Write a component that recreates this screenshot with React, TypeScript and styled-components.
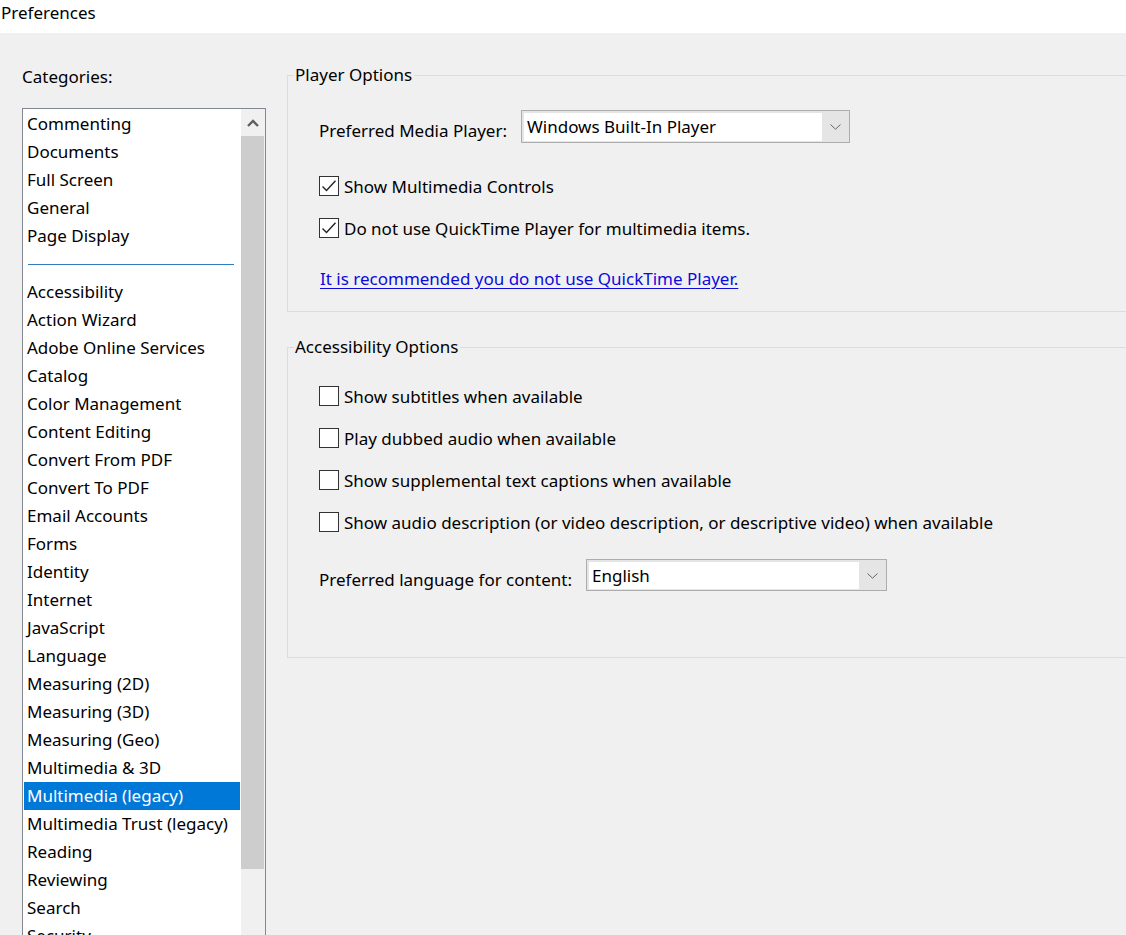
import React from "react";
import styled, { createGlobalStyle } from "styled-components";

const Global = createGlobalStyle`
  html, body { margin: 0; padding: 0; overflow: hidden; }
  body { font-family: "Noto Sans", "Open Sans", sans-serif; color: #000; }
  * { box-sizing: border-box; }
`;

const Root = styled.div`
  width: 1126px;
  height: 935px;
  overflow: hidden;
  background: #f0f0f0;
  display: flex;
  flex-direction: column;
  font-size: 17px;
`;

const TitleBar = styled.div`
  height: 33px;
  background: #ffffff;
  padding-left: 1px;
  line-height: 26px;
  font-size: 17px;
  flex-shrink: 0;
`;

const Body = styled.div`
  flex: 1;
  display: flex;
  min-height: 0;
`;

const LeftColumn = styled.div`
  width: 287px;
  padding: 32px 0 0 22px;
  display: flex;
  flex-direction: column;
  flex-shrink: 0;
`;

const CategoriesLabel = styled.div`
  line-height: 24px;
  height: 24px;
  margin-bottom: 19px;
  flex-shrink: 0;
`;

const ListBox = styled.div`
  width: 244px;
  height: 900px;
  border: 1px solid #828790;
  background: #ffffff;
  display: flex;
  flex-shrink: 0;
  overflow: hidden;
`;

const ItemList = styled.div`
  flex: 1;
  padding: 1px 1px 0 1px;
  display: flex;
  flex-direction: column;
`;

const Item = styled.div<{ $selected?: boolean }>`
  height: 28px;
  line-height: 28px;
  flex-shrink: 0;
  padding-left: 3px;
  white-space: nowrap;
  background: ${(p) => (p.$selected ? "#0078d7" : "transparent")};
  color: ${(p) => (p.$selected ? "#ffffff" : "#000000")};
`;

const Separator = styled.div`
  height: 28px;
  flex-shrink: 0;
  display: flex;
  align-items: center;
  padding: 0 4px 0 4px;
  &::after {
    content: "";
    display: block;
    height: 1px;
    width: 206px;
    background: #2f7dbd;
  }
`;

const ScrollBar = styled.div`
  width: 24px;
  background: #f0f0f0;
  display: flex;
  flex-direction: column;
  flex-shrink: 0;
  padding-right: 1px;
`;

const ScrollButton = styled.div`
  height: 27px;
  flex-shrink: 0;
  display: flex;
  align-items: center;
  justify-content: center;
`;

const ScrollThumb = styled.div`
  height: 733px;
  flex-shrink: 0;
  background: #cdcdcd;
`;

const RightColumn = styled.div`
  flex: 1;
  min-width: 0;
  overflow: hidden;
  padding-top: 30px;
  display: flex;
  flex-direction: column;
`;

const Group = styled.fieldset<{ $pb: number; $mt?: number }>`
  margin: ${(p) => p.$mt ?? 0}px -20px 0 0;
  padding: 0 0 ${(p) => p.$pb}px 31px;
  border: 1px solid #dcdcdc;
  min-width: 0;
  display: flex;
  flex-direction: column;
  align-items: flex-start;
  flex-shrink: 0;
`;

const Legend = styled.legend`
  margin-left: -25px;
  padding: 0 2px 0 1px;
  line-height: 24px;
  font-size: 17px;
`;

const SelectRow = styled.div<{ $mt: number }>`
  display: flex;
  align-items: flex-start;
  gap: 20px;
  margin-top: ${(p) => p.$mt}px;
`;

const FieldLabel = styled.div<{ $pt: number; $w: number }>`
  padding-top: ${(p) => p.$pt}px;
  line-height: 24px;
  width: ${(p) => p.$w}px;
  white-space: nowrap;
`;

const Select = styled.div<{ $w: number; $h: number }>`
  width: ${(p) => p.$w}px;
  height: ${(p) => p.$h}px;
  border: 1px solid #adadad;
  background: #e5e5e5;
  padding: 2px 0 1px 2px;
  display: flex;
`;

const SelectValue = styled.div`
  flex: 1;
  background: #ffffff;
  padding-left: 3px;
  line-height: 27px;
  white-space: nowrap;
`;

const SelectArrow = styled.div`
  width: 27px;
  display: flex;
  align-items: center;
  justify-content: center;
`;

const CheckRow = styled.label<{ $mt: number }>`
  display: flex;
  align-items: center;
  gap: 5px;
  height: 24px;
  margin-top: ${(p) => p.$mt}px;
  white-space: nowrap;
`;

const Box = styled.span`
  width: 20px;
  height: 20px;
  border: 1px solid #333333;
  background: #ffffff;
  display: flex;
  align-items: center;
  justify-content: center;
  flex-shrink: 0;
`;

const Link = styled.a`
  margin-top: 27px;
  margin-left: 1px;
  line-height: 24px;
  color: #0b0bdc;
  text-decoration: underline;
  text-underline-offset: 3px;
  cursor: pointer;
`;

const Chevron = () => (
  <svg width="11" height="6" viewBox="0 0 11 6">
    <path d="M0.5 0.5 L5.5 5.2 L10.5 0.5" fill="none" stroke="#666" strokeWidth="1" />
  </svg>
);

const UpArrow = () => (
  <svg width="12" height="8" viewBox="0 0 12 8">
    <path d="M1 7 L6 2 L11 7" fill="none" stroke="#606060" strokeWidth="2.4" />
  </svg>
);

const CheckBox = ({ checked }: { checked?: boolean }) => (
  <Box>
    {checked && (
      <svg width="16" height="14" viewBox="0 0 16 14">
        <path d="M1.5 7.5 L5.5 11.5 L14.5 1.8" fill="none" stroke="#222" strokeWidth="1.4" />
      </svg>
    )}
  </Box>
);

const topItems = ["Commenting", "Documents", "Full Screen", "General", "Page Display"];
const items = [
  "Accessibility",
  "Action Wizard",
  "Adobe Online Services",
  "Catalog",
  "Color Management",
  "Content Editing",
  "Convert From PDF",
  "Convert To PDF",
  "Email Accounts",
  "Forms",
  "Identity",
  "Internet",
  "JavaScript",
  "Language",
  "Measuring (2D)",
  "Measuring (3D)",
  "Measuring (Geo)",
  "Multimedia & 3D",
  "Multimedia (legacy)",
  "Multimedia Trust (legacy)",
  "Reading",
  "Reviewing",
  "Search",
  "Security",
];

export default function App() {
  return (
    <Root>
      <Global />
      <TitleBar>Preferences</TitleBar>
      <Body>
        <LeftColumn>
          <CategoriesLabel>Categories:</CategoriesLabel>
          <ListBox>
            <ItemList>
              {topItems.map((t) => (
                <Item key={t}>{t}</Item>
              ))}
              <Separator />
              {items.map((t) => (
                <Item key={t} $selected={t === "Multimedia (legacy)"}>
                  {t}
                </Item>
              ))}
            </ItemList>
            <ScrollBar>
              <ScrollButton>
                <UpArrow />
              </ScrollButton>
              <ScrollThumb />
            </ScrollBar>
          </ListBox>
        </LeftColumn>
        <RightColumn>
          <Group $pb={20}>
            <Legend>Player Options</Legend>
            <SelectRow $mt={23}>
              <FieldLabel $pt={9} $w={182}>Preferred Media Player:</FieldLabel>
              <Select $w={329} $h={33}>
                <SelectValue>Windows Built-In Player</SelectValue>
                <SelectArrow>
                  <Chevron />
                </SelectArrow>
              </Select>
            </SelectRow>
            <CheckRow $mt={31}>
              <CheckBox checked />
              Show Multimedia Controls
            </CheckRow>
            <CheckRow $mt={18}>
              <CheckBox checked />
              Do not use QuickTime Player for multimedia items.
            </CheckRow>
            <Link>It is recommended you do not use QuickTime Player.</Link>
          </Group>
          <Group $pb={65} $mt={23}>
            <Legend>Accessibility Options</Legend>
            <CheckRow $mt={25}>
              <CheckBox />
              Show subtitles when available
            </CheckRow>
            <CheckRow $mt={18}>
              <CheckBox />
              Play dubbed audio when available
            </CheckRow>
            <CheckRow $mt={18}>
              <CheckBox />
              Show supplemental text captions when available
            </CheckRow>
            <CheckRow $mt={18}>
              <CheckBox />
              Show audio description (or video description, or descriptive video) when available
            </CheckRow>
            <SelectRow $mt={25}>
              <FieldLabel $pt={9} $w={247}>Preferred language for content:</FieldLabel>
              <Select $w={301} $h={32}>
                <SelectValue>English</SelectValue>
                <SelectArrow>
                  <Chevron />
                </SelectArrow>
              </Select>
            </SelectRow>
          </Group>
        </RightColumn>
      </Body>
    </Root>
  );
}
